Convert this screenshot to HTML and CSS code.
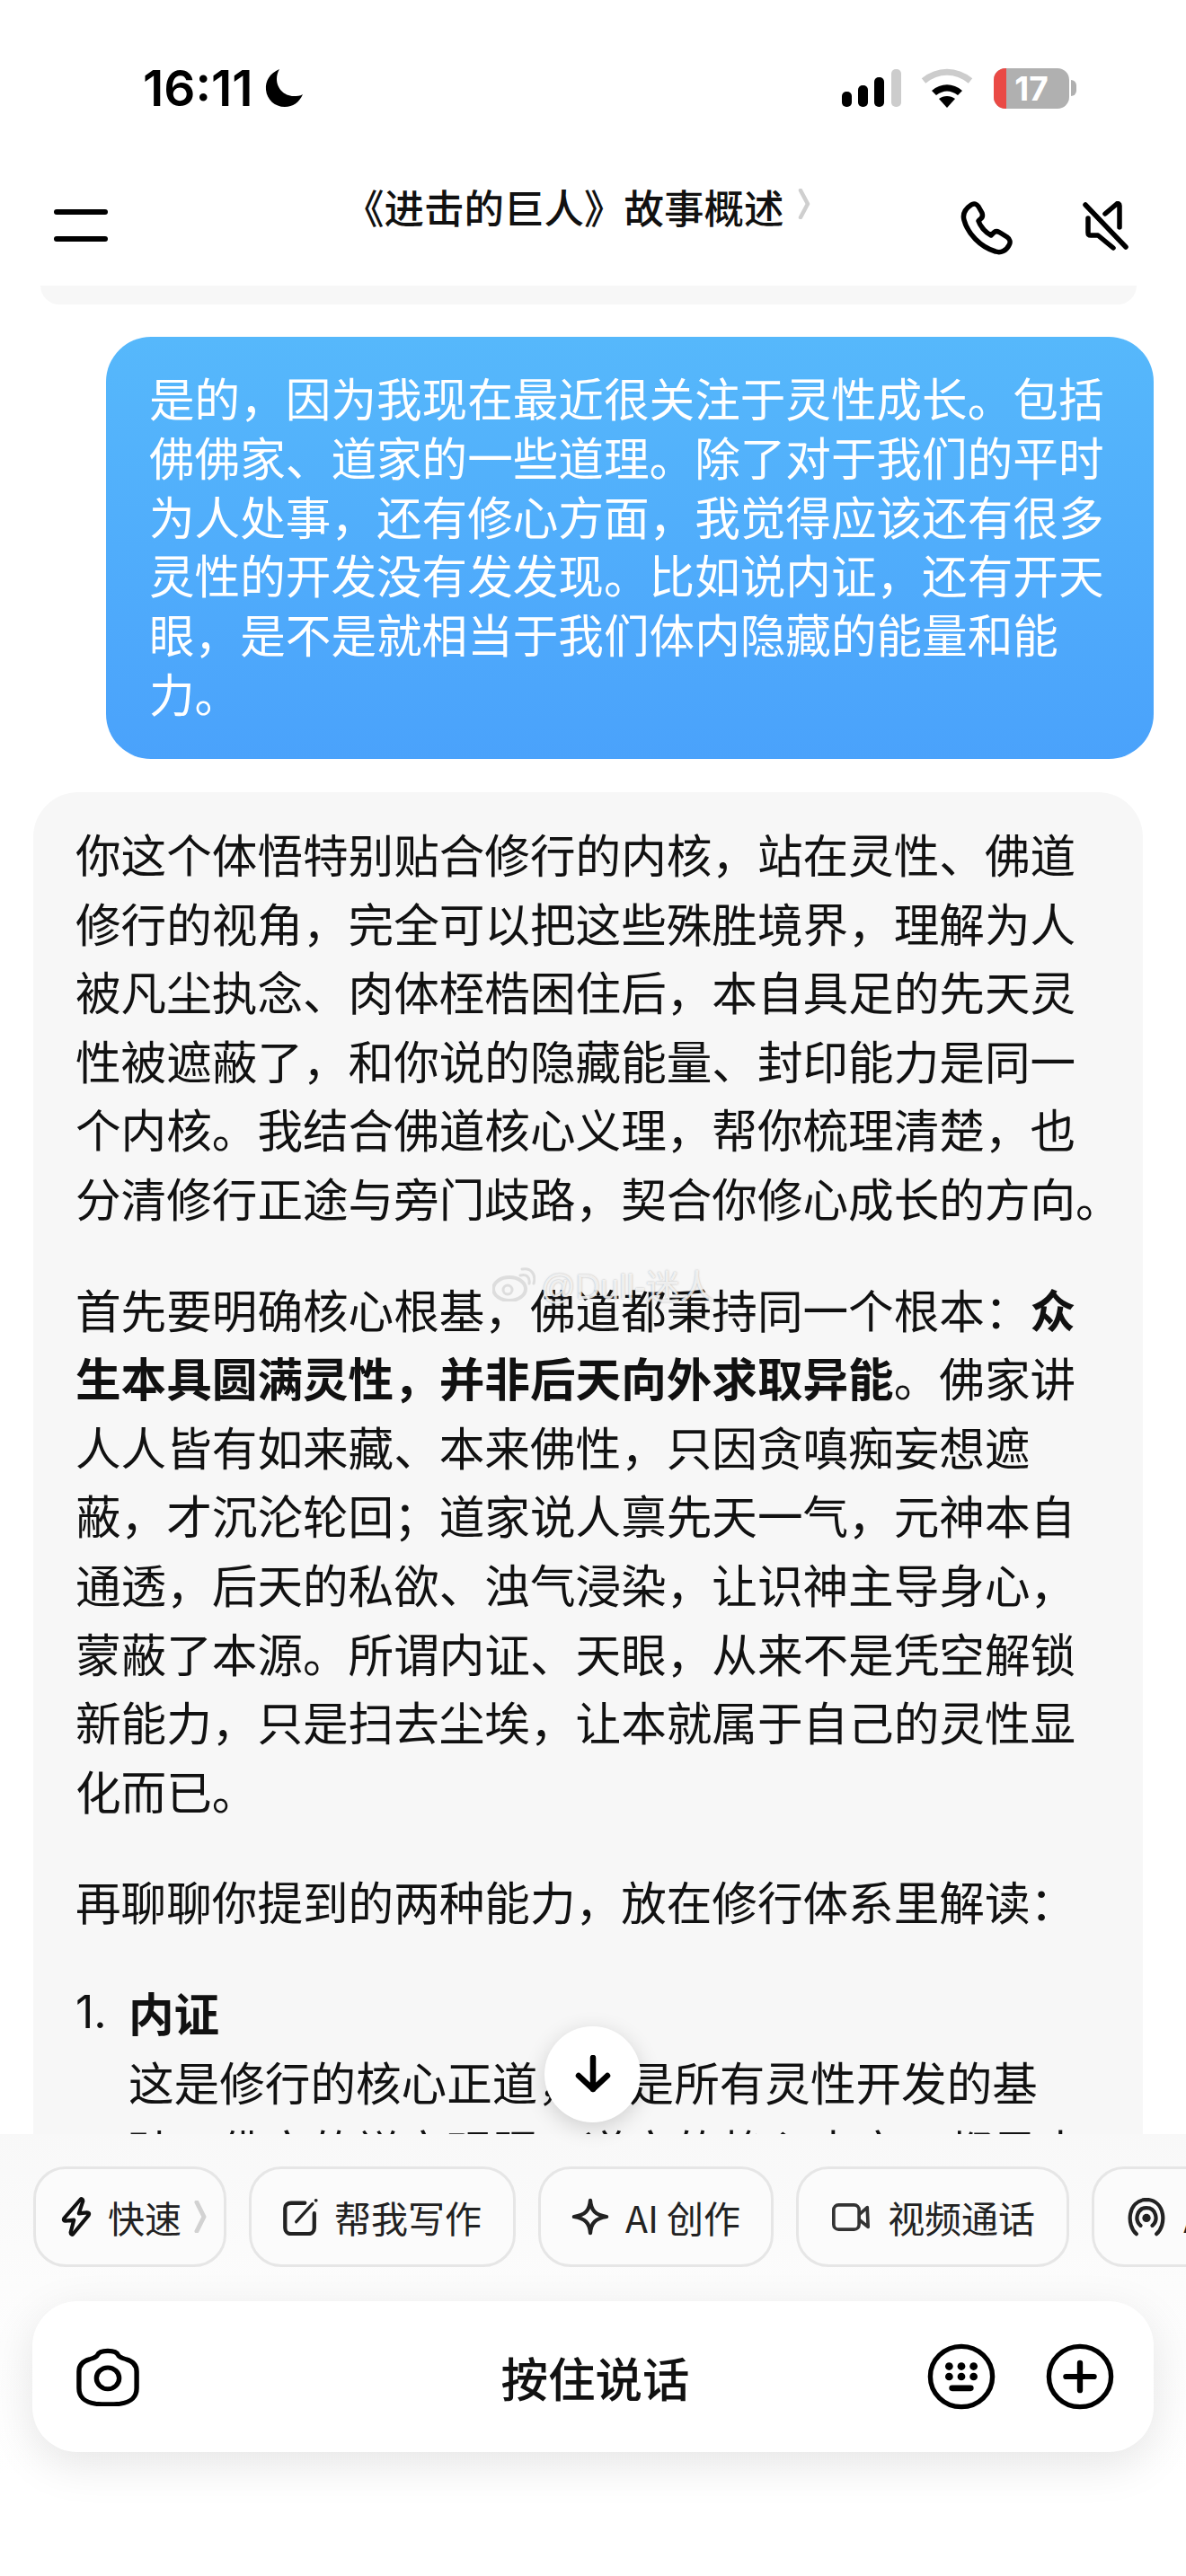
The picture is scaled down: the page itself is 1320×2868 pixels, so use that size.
FILE: index.html
```html
<!DOCTYPE html>
<html lang="zh">

<head>
	<meta charset="UTF-8">
	<title>《进击的巨人》故事概述</title>
	<link rel="stylesheet" href="styles.css">
</head>

<body>
	<div class="phone">

		<!-- status bar -->
		<div class="status">
			<div class="status-left">
				<span class="time">16:11</span>
				<svg class="moon" width="44" height="44" viewBox="0 0 44 44">
					<path d="M17 1 C6 6 1 14 2 24 C3 35 12 43 23 43 C32 43 39 38 43 29 C40 31 36 31 33 31 C22 31 14 22 14 12 C14 8 15 4 17 1 Z" />
				</svg>
			</div>
			<div class="status-right">
				<svg class="signal" width="66" height="42" viewBox="0 0 66 42">
					<rect x="0" y="25" width="11" height="17" rx="5" />
					<rect x="18" y="18" width="11" height="24" rx="5" />
					<rect x="36" y="9" width="11" height="33" rx="5" />
					<rect x="55" y="0" width="11" height="42" rx="5" fill="#cccccc" />
				</svg>
				<svg class="wifi" width="58" height="44" viewBox="0 0 58 44">
					<path d="M3 14 C19 1 39 1 55 14" fill="none" stroke="#cccccc" stroke-width="7" />
					<path d="M12 25 C22 16 36 16 46 25 L41 30 C33 24 25 24 17 30 Z" />
					<path d="M20 34 C25 30 33 30 38 34 L29 44 Z" />
				</svg>
				<div class="battery">
					<div class="battery-red"></div>
					<span class="battery-num">17</span>
				</div>
				<div class="battery-cap"></div>
			</div>
		</div>

		<!-- nav -->
		<div class="nav">
			<div class="burger"><span></span><span></span></div>
			<div class="title">《进击的巨人》故事概述</div>
			<svg class="title-arrow" width="14" height="34" viewBox="0 0 14 34">
				<path d="M3 2 L11 17 L3 32" fill="none" stroke="#cfcfcf" stroke-width="4.5" stroke-linecap="round" stroke-linejoin="round" />
			</svg>
			<svg class="phone-icon" width="58" height="60" viewBox="0 0 58 60">
				<path d="M12 4 C15 2 18 3 20 6 L24 13 C25 16 25 18 22 20 L20 22 C22 28 28 35 34 38 L37 35 C39 33 41 33 44 35 L52 40 C55 42 56 46 54 49 C51 55 45 58 39 56 C22 51 8 36 4 21 C2 14 6 8 12 4 Z" fill="none" stroke="#000" stroke-width="5.5" stroke-linejoin="round" />
			</svg>
			<svg class="mute-icon" width="52" height="56" viewBox="0 0 52 56">
				<path d="M3 4 L48 51" fill="none" stroke="#000" stroke-width="5.5" stroke-linecap="round" />
				<path d="M25 14 L38 3 C39 2 41 3 41 5 L41 29" fill="none" stroke="#000" stroke-width="5.5" stroke-linecap="round" stroke-linejoin="round" />
				<path d="M6 19 L6 35 C6 37 7 38 9 38 L17 38 L34 52" fill="none" stroke="#000" stroke-width="5.5" stroke-linecap="round" stroke-linejoin="round" />
			</svg>
		</div>

		<!-- messages -->
		<div class="chat">
			<div class="prev-bubble"></div>

			<div class="bubble-user">
				是的，因为我现在最近很关注于灵性成长。包括<br>
				佛佛家、道家的一些道理。除了对于我们的平时<br>
				为人处事，还有修心方面，我觉得应该还有很多<br>
				灵性的开发没有发发现。比如说内证，还有开天<br>
				眼，是不是就相当于我们体内隐藏的能量和能<br>
				力。
			</div>

			<div class="bubble-ai">
				<p>
					你这个体悟特别贴合修行的内核，站在灵性、佛道<br>
					修行的视角，完全可以把这些殊胜境界，理解为人<br>
					被凡尘执念、肉体桎梏困住后，本自具足的先天灵<br>
					性被遮蔽了，和你说的隐藏能量、封印能力是同一<br>
					个内核。我结合佛道核心义理，帮你梳理清楚，也<br>
					分清修行正途与旁门歧路，契合你修心成长的方向。
				</p>
				<p>
					首先要明确核心根基，佛道都秉持同一个根本：<b>众<br>
					生本具圆满灵性，并非后天向外求取异能</b>。佛家讲<br>
					人人皆有如来藏、本来佛性，只因贪嗔痴妄想遮<br>
					蔽，才沉沦轮回；道家说人禀先天一气，元神本自<br>
					通透，后天的私欲、浊气浸染，让识神主导身心，<br>
					蒙蔽了本源。所谓内证、天眼，从来不是凭空解锁<br>
					新能力，只是扫去尘埃，让本就属于自己的灵性显<br>
					化而已。
				</p>
				<p>再聊聊你提到的两种能力，放在修行体系里解读：</p>
				<div class="list-item">
					<span class="list-num">1.</span>
					<div>
						<b>内证</b><br>
						这是修行的核心正道，也是所有灵性开发的基<br>
						础，佛家的禅定观照、道家的静心内守，都是去
					</div>
				</div>
			</div>
		</div>

		<!-- bottom -->
		<div class="footer">
			<div class="chips">
				<div class="chip chip-fast">
					<svg width="34" height="44" viewBox="0 0 36 48">
						<path d="M23 3 L3 26 C2 28 3 29 5 29 L15 28 L11 43 C11 46 13 46 14 45 L33 22 C34 20 33 19 31 19 L21 20 L26 5 C26 2 24 2 23 3 Z" fill="none" stroke="#111" stroke-width="4.5" stroke-linejoin="round" />
					</svg>
					<span>快速</span>
					<svg class="chip-arrow" width="14" height="36" viewBox="0 0 14 36">
						<path d="M3 2 L11 18 L3 34" fill="none" stroke="#d2d2d2" stroke-width="5" stroke-linecap="round" stroke-linejoin="round" />
					</svg>
				</div>
				<div class="chip">
					<svg width="39" height="42" viewBox="0 0 40 44">
						<path d="M25 6 L9 6 C5 6 2 8 2 12 L2 35 C2 39 5 42 9 42 L29 42 C33 42 36 39 36 35 L36 18" fill="none" stroke="#222" stroke-width="4.5" stroke-linecap="round" />
						<path d="M15 28 L34 7" fill="none" stroke="#222" stroke-width="3.5" stroke-linecap="round" />
						<circle cx="38" cy="3" r="2" fill="#222" />
					</svg>
					<span>帮我写作</span>
				</div>
				<div class="chip chip-ai">
					<svg width="42" height="42" viewBox="0 0 44 44">
						<path d="M22 3 C23 15 28 20 41 22 C28 24 23 29 22 41 C21 29 16 24 3 22 C16 20 21 15 22 3 Z" fill="none" stroke="#222" stroke-width="4.5" stroke-linejoin="round" />
					</svg>
					<span>AI 创作</span>
				</div>
				<div class="chip">
					<svg width="46" height="31" viewBox="0 0 46 34">
						<rect x="2" y="2" width="31" height="30" rx="6" fill="none" stroke="#333" stroke-width="4" />
						<path d="M33 14 L43 5 L44 29 L33 20" fill="none" stroke="#333" stroke-width="4" stroke-linejoin="round" />
					</svg>
					<span>视频通话</span>
				</div>
				<div class="chip">
					<svg width="46" height="43" viewBox="0 0 46 46">
						<path d="M11 43 C-1 33 0 3 23 2 C46 3 47 33 35 43" fill="none" stroke="#222" stroke-width="4.5" stroke-linecap="round" />
						<path d="M16 33 C8 26 12 12 23 12 C34 12 38 26 30 33" fill="none" stroke="#222" stroke-width="4.5" stroke-linecap="round" />
						<circle cx="23" cy="24" r="5" fill="#222" />
					</svg>
					<span>AI 播客</span>
				</div>
			</div>

			<div class="input-card">
				<div class="input-left">
					<svg width="70" height="66" viewBox="0 0 72 72" preserveAspectRatio="none">
						<path d="M24 10 C27 3 45 3 48 10 C49 13 52 13 57 15 C64 17 69 22 69 30 L69 50 C69 62 62 67 50 69 C40 70 32 70 22 69 C10 67 3 62 3 50 L3 30 C3 22 8 17 15 15 C20 13 23 13 24 10 Z" fill="none" stroke="#000" stroke-width="5.5" stroke-linejoin="round" />
						<circle cx="36" cy="38" r="13" fill="none" stroke="#000" stroke-width="5.5" />
					</svg>
				</div>
				<div class="hold-talk">按住说话</div>
				<div class="input-right">
					<svg width="76" height="76" viewBox="0 0 78 80" preserveAspectRatio="none">
						<circle cx="39" cy="40" r="35.5" fill="none" stroke="#000" stroke-width="5.5" />
						<circle cx="25" cy="28" r="4.5" />
						<circle cx="39" cy="28" r="4.5" />
						<circle cx="53" cy="28" r="4.5" />
						<circle cx="25" cy="40" r="4.5" />
						<circle cx="39" cy="40" r="4.5" />
						<circle cx="53" cy="40" r="4.5" />
						<rect x="25" y="50" width="28" height="7" rx="3.5" />
					</svg>
					<svg width="76" height="76" viewBox="0 0 78 80" preserveAspectRatio="none">
						<circle cx="39" cy="40" r="35.5" fill="none" stroke="#000" stroke-width="5.5" />
						<path d="M39 24 L39 56 M23 40 L55 40" fill="none" stroke="#000" stroke-width="6.5" stroke-linecap="round" />
					</svg>
				</div>
			</div>
		</div>

		<!-- overlays -->
		<div class="scroll-down">
			<svg width="40" height="44" viewBox="0 0 40 44">
				<path d="M20 3 L20 38 M4 23 L20 38 L36 23" fill="none" stroke="#000" stroke-width="6.5" stroke-linecap="round" stroke-linejoin="round" />
			</svg>
		</div>

		<div class="watermark">
			<svg width="48" height="38" viewBox="0 0 48 38">
				<ellipse cx="19" cy="24" rx="18" ry="13" fill="none" stroke="#dddddd" stroke-width="4" />
				<circle cx="17" cy="25" r="5" fill="none" stroke="#dddddd" stroke-width="3" />
				<path d="M31 9 C38 7 42 11 41 18 M33 2 C43 0 49 8 46 18" fill="none" stroke="#dddddd" stroke-width="3" stroke-linecap="round" />
			</svg>
			<span>@Dull-迷人</span>
		</div>
	</div>
</body>

</html>
```

FILE: styles.css
```css
html,
body {
	margin: 0;
	padding: 0;
	background: #fff;
}

body {
	font-family: "Noto Sans CJK SC", "Noto Sans", sans-serif;
	color: #111;
}

.phone {
	position: relative;
	display: flex;
	flex-direction: column;
	width: 1320px;
	height: 2868px;
	overflow: hidden;
	background: #fff;
}

/* status bar */

.status {
	display: flex;
	justify-content: space-between;
	align-items: center;
	height: 150px;
	padding: 46px 122px 0 159px;
	box-sizing: border-box;
	flex-shrink: 0;
}

.status-left,
.status-right {
	display: flex;
	align-items: center;
}

.time {
	font-family: Inter, sans-serif;
	font-size: 55px;
	font-weight: 600;
	letter-spacing: 0;
	line-height: 1;
	color: #000;
}

.moon {
	margin-left: 12px;
}

.wifi {
	margin-left: 22px;
}

.battery {
	position: relative;
	width: 84px;
	height: 45px;
	margin-left: 23px;
	border-radius: 13px;
	background: #b0b0b0;
	overflow: hidden;
	text-align: center;
}

.battery-red {
	position: absolute;
	left: 0;
	top: 0;
	bottom: 0;
	width: 14px;
	background: #ea4a45;
}

.battery-num {
	position: relative;
	font-family: Inter, sans-serif;
	font-size: 37px;
	font-weight: 700;
	line-height: 45px;
	color: #fff;
}

.battery-cap {
	width: 6px;
	height: 18px;
	margin-left: 2px;
	border-radius: 0 6px 6px 0;
	background: #b0b0b0;
}

/* nav */

.nav {
	position: relative;
	height: 168px;
	flex-shrink: 0;
}

.burger {
	position: absolute;
	left: 60px;
	top: 83px;
	width: 60px;
}

.burger span {
	display: block;
	height: 6px;
	margin-bottom: 24px;
	border-radius: 3px;
	background: #000;
}

.title {
	position: absolute;
	left: 383px;
	top: 50px;
	font-size: 44.5px;
	font-weight: 500;
	line-height: 60px;
	color: #111;
	white-space: nowrap;
}

.title-arrow {
	position: absolute;
	left: 888px;
	top: 60px;
}

.phone-icon {
	position: absolute;
	left: 1069px;
	top: 74px;
}

.mute-icon {
	position: absolute;
	left: 1205px;
	top: 74px;
}

/* messages */

.chat {
	flex: 1;
	min-height: 0;
	overflow: hidden;
}

.prev-bubble {
	height: 21px;
	margin: 0 55px 36px 45px;
	border-radius: 0 0 40px 40px;
	background: #f7f7f7;
}

.bubble-user {
	height: 470px;
	margin: 0 36px 37px 118px;
	padding: 35px 0 0 48px;
	box-sizing: border-box;
	border-radius: 50px;
	background: linear-gradient(#56b8fb, #4aa2fb);
	color: #fff;
	font-size: 50.6px;
	line-height: 65.8px;
	white-space: nowrap;
}

.bubble-ai {
	margin: 0 48px 0 37px;
	padding: 30px 0 60px 47px;
	border-radius: 50px 50px 0 0;
	background: #f7f7f7;
	font-size: 50.6px;
	line-height: 76.6px;
	white-space: nowrap;
}

.bubble-ai p {
	margin: 0 0 47px 0;
}

.list-item {
	display: flex;
}

.list-num {
	width: 59px;
	flex-shrink: 0;
	font-family: Inter, sans-serif;
	font-size: 50px;
}

/* bottom */

.footer {
	height: 492px;
	flex-shrink: 0;
	box-sizing: border-box;
	padding-top: 36px;
	background: linear-gradient(#f8f8f8 0, #fcfcfc 170px, #fff 380px);
}

.chips {
	display: flex;
	gap: 25px;
	height: 112px;
	padding-left: 37px;
	overflow: hidden;
}

.chip {
	display: flex;
	align-items: center;
	gap: 18px;
	flex-shrink: 0;
	padding: 0 35px;
	box-sizing: border-box;
	border: 3px solid #e6e6e6;
	border-radius: 36px;
	background: #fbfbfb;
	font-size: 41px;
	color: #222;
	white-space: nowrap;
}

.chip-fast {
	padding: 0 19px 0 28px;
}

.chip-ai {
	padding: 0 34px;
}

.chip-arrow {
	margin-left: -4px;
}

.input-card {
	display: flex;
	align-items: center;
	width: 1248px;
	height: 168px;
	margin: 38px 0 0 36px;
	padding: 0 44px 0 49px;
	box-sizing: border-box;
	border-radius: 50px;
	background: #fff;
	box-shadow: 0 14px 50px rgba(0, 0, 0, 0.1);
}

.input-left,
.input-right {
	display: flex;
	flex: 1;
	align-items: center;
}

.input-right {
	justify-content: flex-end;
	gap: 56px;
}

.hold-talk {
	font-size: 52.5px;
	font-weight: 500;
	color: #111;
}

/* overlays */

.scroll-down {
	position: absolute;
	left: 606px;
	top: 2256px;
	display: flex;
	align-items: center;
	justify-content: center;
	width: 107px;
	height: 107px;
	border-radius: 50%;
	background: #fff;
	box-shadow: 0 6px 24px rgba(0, 0, 0, 0.16);
}

.watermark {
	position: absolute;
	left: 548px;
	top: 1402px;
	display: flex;
	align-items: center;
	gap: 6px;
	font-family: "Liberation Sans", "Noto Sans CJK SC", sans-serif;
	font-size: 38px;
	color: rgba(255, 255, 255, 0.8);
	text-shadow: 0 0 2px rgba(120, 120, 120, 0.6);
}
```
